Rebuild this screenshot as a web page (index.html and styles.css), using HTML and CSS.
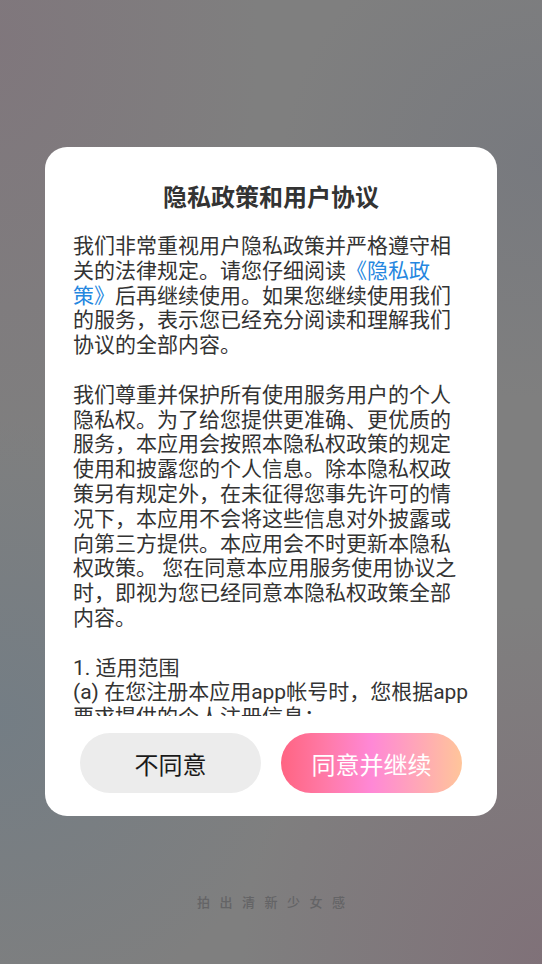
FILE: index.html
```html
<!DOCTYPE html>
<html lang="zh-CN">
<head>
<meta charset="utf-8">
<title>隐私政策和用户协议</title>
<link rel="stylesheet" href="styles.css">
</head>
<body>
<div class="screen">
  <div class="dialog">
    <h1 class="title">隐私政策和用户协议</h1>
    <div class="content">
      <p class="para">我们非常重视用户隐私政策并严格遵守相关的法律规定。请您仔细阅读<span class="link">《隐私政<wbr>策》</span>后再继续使用。如果您继续使用我们的服务，表示您已经充分阅读和理解我们协议的全部内容。</p>
      <p class="para">我们尊重并保护所有使用服务用户的个人隐私权。为了给您提供更准确、更优质的服务，本应用会按照本隐私权政策的规定使用和披露您的个人信息。除本隐私权政策另有规定外，在未征得您事先许可的情况下，本应用不会将这些信息对外披露或向第三方提供。本应用会不时更新本隐私权政策。 您在同意本应用服务使用协议之时，即视为您已经同意本隐私权政策全部内容。</p>
      <p class="para">1. 适用范围<br>(a) 在您注册本应用app帐号时，您根据app要求提供的个人注册信息；<br>(b) 在您使用本应用网络服务，或访问本应用平台网页时，本应用自动接收并记录的您的浏览器和计算机上的信息。</p>
    </div>
    <div class="actions">
      <button class="btn btn-decline">不同意</button>
      <button class="btn btn-accept">同意并继续</button>
    </div>
  </div>
  <div class="slogan">拍出清新少女感</div>
</div>
</body>
</html>
```
FILE: styles.css
```css
html, body {
  margin: 0;
  padding: 0;
}
body {
  font-family: "Roboto", "Noto Sans CJK SC", sans-serif;
}
.screen {
  width: 542px;
  height: 964px;
  box-sizing: border-box;
  padding-top: 147px;
  background-color: #7f7f7f;
  background-image:
    radial-gradient(ellipse 260px 420px at 0px 40px, rgba(128, 112, 122, 0.55), rgba(128, 112, 122, 0) 100%),
    radial-gradient(ellipse 300px 300px at 0px 720px, rgba(108, 124, 136, 0.6), rgba(108, 124, 136, 0) 100%),
    radial-gradient(ellipse 300px 360px at 542px 964px, rgba(128, 104, 116, 0.6), rgba(128, 104, 116, 0) 100%),
    radial-gradient(ellipse 260px 240px at 542px 160px, rgba(112, 116, 126, 0.5), rgba(112, 116, 126, 0) 100%);
  display: flex;
  flex-direction: column;
  align-items: center;
}
.dialog {
  width: 452px;
  background: #ffffff;
  border-radius: 22px;
  box-sizing: border-box;
  padding: 35px 0 23px;
  display: flex;
  flex-direction: column;
}
.title {
  margin: 0;
  font-size: 24px;
  line-height: 32px;
  font-weight: 700;
  color: #333333;
  text-align: center;
}
.content {
  margin: 20px 0 0 28px;
  width: 398px;
  height: 482px;
  overflow: hidden;
  font-size: 21px;
  line-height: 24.8px;
  color: #333333;
}
.para {
  margin: 0 0 24.8px;
}
.link {
  color: #2587e0;
}
.actions {
  display: flex;
  gap: 20px;
  padding: 0 35px;
  margin-top: 17px;
}
.btn {
  flex: 1;
  height: 60px;
  border: none;
  border-radius: 30px;
  font-family: "Roboto", "Noto Sans CJK SC", sans-serif;
  font-size: 24px;
  padding: 0;
}
.btn-decline {
  background: #ececec;
  color: #1a1a1a;
}
.btn-accept {
  background: linear-gradient(90deg, #ff6482 0%, #ff7aa8 25%, #ff88d6 50%, #ffa6b8 75%, #ffc59a 100%);
  color: #ffffff;
}
.slogan {
  margin-top: 78px;
  font-size: 13px;
  line-height: 18px;
  font-weight: 500;
  letter-spacing: 9.5px;
  padding-left: 9.5px;
  color: #646466;
}
```
